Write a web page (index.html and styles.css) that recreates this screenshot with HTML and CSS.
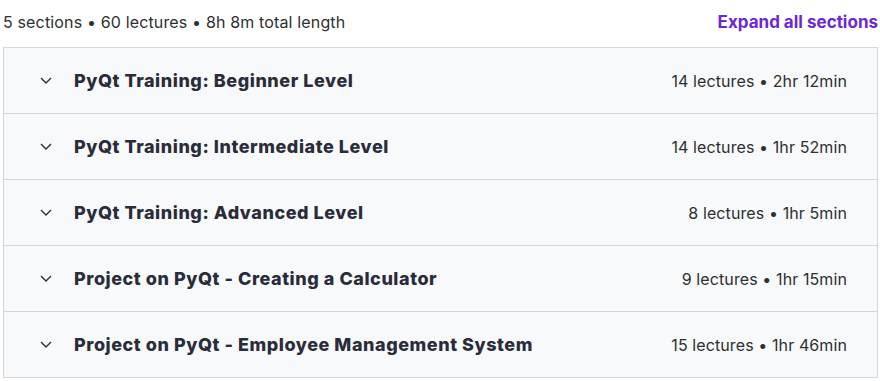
FILE: index.html
```html
<!DOCTYPE html>
<html lang="en">
<head>
  <meta charset="UTF-8">
  <title>Course content</title>
  <meta name="viewport" content="width=device-width, initial-scale=1.0">
  <link rel="stylesheet" href="styles.css">
</head>
<body>
  <div class="curriculum">
    <div class="curriculum-head">
      <span class="summary">5 sections • 60 lectures • 8h 8m total length</span>
      <button class="expand-all">Expand all sections</button>
    </div>

    <div class="sections">
      <div class="section">
        <svg class="chevron" width="12" height="7" viewBox="0 0 12 7"><polyline points="1,1 6,6 11,1"/></svg>
        <span class="section-title">PyQt Training: Beginner Level</span>
        <span class="section-meta">14 lectures • 2hr 12min</span>
      </div>
      <div class="section">
        <svg class="chevron" width="12" height="7" viewBox="0 0 12 7"><polyline points="1,1 6,6 11,1"/></svg>
        <span class="section-title">PyQt Training: Intermediate Level</span>
        <span class="section-meta">14 lectures • 1hr 52min</span>
      </div>
      <div class="section">
        <svg class="chevron" width="12" height="7" viewBox="0 0 12 7"><polyline points="1,1 6,6 11,1"/></svg>
        <span class="section-title">PyQt Training: Advanced Level</span>
        <span class="section-meta">8 lectures • 1hr 5min</span>
      </div>
      <div class="section">
        <svg class="chevron" width="12" height="7" viewBox="0 0 12 7"><polyline points="1,1 6,6 11,1"/></svg>
        <span class="section-title">Project on PyQt - Creating a Calculator</span>
        <span class="section-meta">9 lectures • 1hr 15min</span>
      </div>
      <div class="section">
        <svg class="chevron" width="12" height="7" viewBox="0 0 12 7"><polyline points="1,1 6,6 11,1"/></svg>
        <span class="section-title">Project on PyQt - Employee Management System</span>
        <span class="section-meta">15 lectures • 1hr 46min</span>
      </div>
    </div>
  </div>
</body>
</html>
```

FILE: styles.css
```css
* { box-sizing: border-box; }
body {
  margin: 0; padding: 0;
  font-family: Inter, 'Noto Sans', sans-serif;
  background: #fff;
  color: #2d2f31;
}
.curriculum {
  padding: 10px 2px 0 3px;
}
.curriculum-head {
  display: flex; justify-content: space-between; align-items: center;
  height: 24px; margin-bottom: 13px;
}
.summary { font-size: 16px; letter-spacing: 0.15px; color: #2d2f31; }
.expand-all {
  border: none; background: none; padding: 0; cursor: pointer;
  font-family: inherit; font-size: 17px; font-weight: 700; color: #6d28d2;
}
.sections {
  border: 1px solid #d1d7dc;
}
.section {
  display: flex; align-items: center;
  height: 66px;
  padding: 0 30px 0 36px;
  background: #f7f9fa;
  border-bottom: 1px solid #d1d7dc;
}
.section:last-child { border-bottom: none; height: 65px; }
.chevron {
  fill: none; stroke: #2d2f31; stroke-width: 1.4;
  margin-right: 22px; flex-shrink: 0;
}
.section-title {
  flex: 1;
  font-size: 18px; font-weight: 800; letter-spacing: 0.55px;
  color: #2b2c3a;
}
.section-meta { font-size: 16px; letter-spacing: 0.1px; }
```
